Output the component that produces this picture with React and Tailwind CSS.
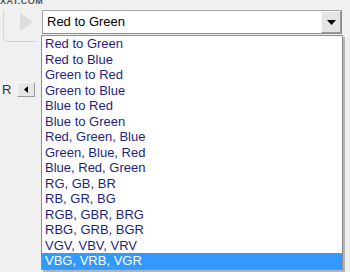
import React from "react";

const items = [
  "Red to Green",
  "Red to Blue",
  "Green to Red",
  "Green to Blue",
  "Blue to Red",
  "Blue to Green",
  "Red, Green, Blue",
  "Green, Blue, Red",
  "Blue, Red, Green",
  "RG, GB, BR",
  "RB, GR, BG",
  "RGB, GBR, BRG",
  "RBG, GRB, BGR",
  "VGV, VBV, VRV",
];

export default function App() {
  return (
    <div className="relative w-[350px] h-[272px] overflow-hidden bg-[#f0f0f0] font-['Liberation_Sans',Arial,sans-serif]">
      <div className="flex flex-col">
        {/* top strip */}
        <div className="h-[10px] relative">
          <div className="absolute left-0 top-[-4px] text-[9px] font-bold leading-[10px] text-[#555] tracking-[0.5px]">
            XAT.COM
          </div>
        </div>
        <div className="flex flex-row">
          {/* play button shape */}
          <div className="w-[42px] h-[32px] flex">
            <div className="ml-[3px] w-[34px] h-[32px] rounded-bl-[4px] border-l border-b border-[#d4d4d4] flex items-start justify-end pr-[4px] pt-[3px]">
              <svg width="13" height="18" viewBox="0 0 13 18">
                <polygon points="0,0 13,9 0,18" fill="#dcdcdc" />
              </svg>
            </div>
          </div>
          {/* combo */}
          <div className="w-[300px] h-[24px] bg-white border border-[#a5a5a5] border-r-[#8a8a8a] border-b-[#8a8a8a] flex items-center">
            <div className="flex-1 pl-[4px] text-[13px] text-black leading-[22px]">Red to Green</div>
            <div className="w-[20px] h-[22px] bg-[#e4e4e4] border border-[#f8f8f8] border-r-[#9a9a9a] border-b-[#9a9a9a] flex items-center justify-center">
              <svg width="9" height="5" viewBox="0 0 9 5">
                <polygon points="0,0 9,0 4.5,5" fill="#000" />
              </svg>
            </div>
          </div>
        </div>
        {/* R row */}
        <div className="mt-[40px] flex flex-row items-center h-[15px]">
          <div className="pl-[2px] w-[17px] text-[13px] leading-[15px] text-[#333]">R</div>
          <div className="w-[18px] h-[15px] bg-[#e6e6e6] border border-[#fafafa] border-r-[#9a9a9a] border-b-[#9a9a9a] flex items-center justify-center">
            <svg width="4" height="7" viewBox="0 0 4 7">
              <polygon points="4,0 4,7 0,3.5" fill="#000" />
            </svg>
          </div>
        </div>
      </div>

      {/* dropdown list */}
      <div className="absolute left-[41px] top-[35px] w-[302px] bg-white border border-[#8c8c8c] shadow-[2px_2px_0_#b4b4b4]">
        {items.map((t) => (
          <div key={t} className="h-[15.5px] leading-[15.5px] pl-[3px] text-[13px] text-[#1f1f7d] whitespace-nowrap">
            {t}
          </div>
        ))}
        <div className="h-[15.5px] leading-[15.5px] pl-[3px] text-[13px] text-white bg-[#3399ff] whitespace-nowrap">
          VBG, VRB, VGR
        </div>
      </div>
    </div>
  );
}
